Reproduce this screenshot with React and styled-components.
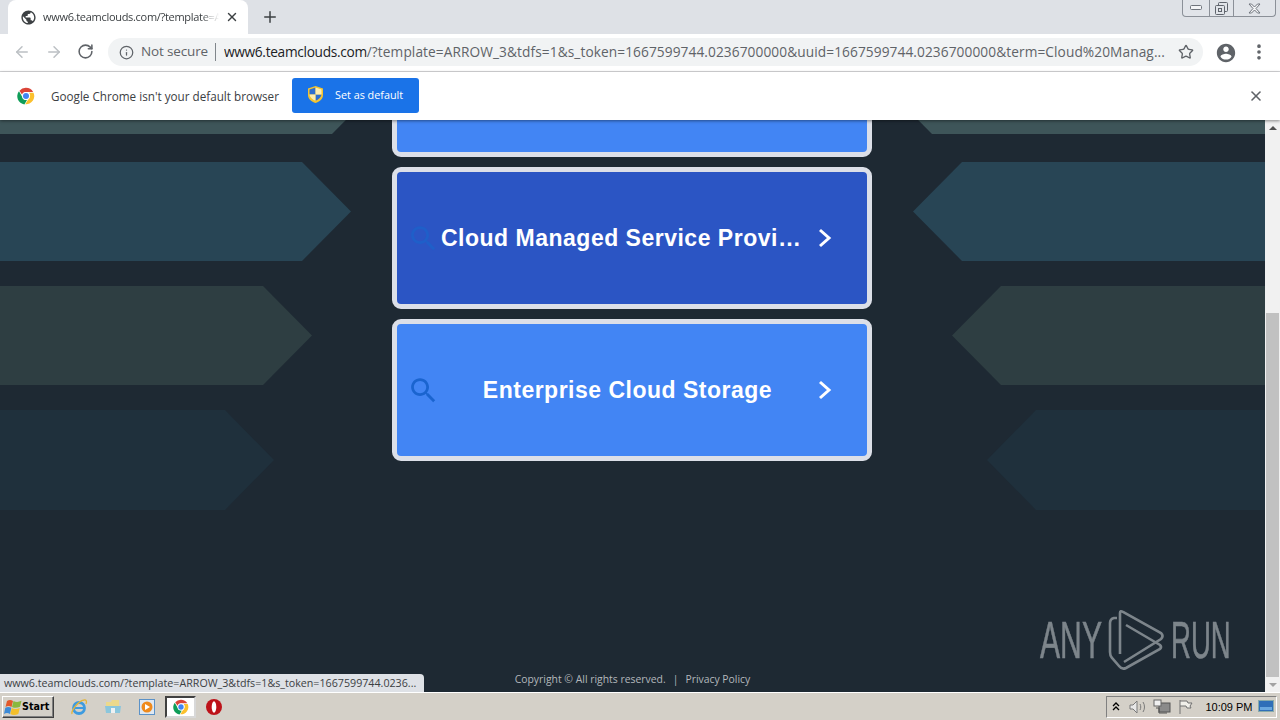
import React from "react";
import styled, { createGlobalStyle } from "styled-components";
import { ArrowLeft, ArrowRight, RotateCw, Star, Info, MoreVertical, X, Plus } from "lucide-react";

const Global = createGlobalStyle`
  html, body { margin: 0; padding: 0; width: 1280px; height: 720px; overflow: hidden; background: #1e2933; }
  * { box-sizing: border-box; }
`;

const UI = `"Open Sans", "Noto Sans", sans-serif`;

const Screen = styled.div`
  width: 1280px; height: 720px; display: flex; flex-direction: column; overflow: hidden;
  font-family: ${UI}; position: relative;
`;

/* ---------- tab strip ---------- */
const TabStrip = styled.div`
  height: 34px; flex: none; background: #dee1e6; display: flex; align-items: flex-end; padding-left: 8px; position: relative;
`;
const Tab = styled.div`
  width: 240px; height: 34px; background: #fff; border-radius: 8px 8px 0 0; display: flex; align-items: center;
  padding: 0 9px 0 12px; color: #3c4043;
`;
const TabTitle = styled.div`
  width: 176px; margin: 0 0 2px 6px; font-size: 11px; letter-spacing: -0.3px; white-space: nowrap; overflow: hidden;
  -webkit-mask-image: linear-gradient(90deg, #000 90%, transparent);
  mask-image: linear-gradient(90deg, #000 90%, transparent);
`;
const TabClose = styled.div`
  margin-left: auto; display: flex; color: #3c4043;
`;
const NewTab = styled.div`
  margin: 0 0 8px 13px; width: 18px; height: 18px; display: flex; color: #3c4043;
`;
const WindowControls = styled.div`
  position: absolute; right: 4px; top: 0; height: 17px; display: flex; border: 1px solid #8b9098; border-top: 0;
  border-radius: 0 0 4px 4px; background: #e1e4e9;
`;
const WinButton = styled.div`
  width: ${p => p.$w}px; display: flex; align-items: center; justify-content: center;
  & + & { border-left: 1px solid #8b9098; }
`;

/* ---------- toolbar ---------- */
const Toolbar = styled.div`
  height: 38px; flex: none; background: #fff; border-bottom: 1px solid #d7d8da; display: flex; align-items: center; padding: 0 0 1px 13px;
`;
const NavButton = styled.div`
  width: 18px; height: 18px; margin-right: ${p => p.$gap}px; display: flex; color: ${p => (p.$off ? "#bcc0c4" : "#5f6368")};
`;
const Omnibox = styled.div`
  width: 1095px; height: 28px; margin-left: 13px; background: #f1f3f4; border-radius: 14px; display: flex; align-items: center;
  padding: 0 9px 0 11px; font-size: 14px;
`;
const SecurityLabel = styled.span`
  margin: 0 0 2px 7px; color: #5f6368; font-size: 13.5px; letter-spacing: -0.15px; white-space: nowrap;
`;
const Separator = styled.span`
  width: 1px; height: 18px; margin: 0 8px 0 7px; background: #80868b; flex: none;
`;
const Url = styled.div`
  width: 945px; margin-bottom: 2px; white-space: nowrap; overflow: hidden; color: #5f6368; font-size: 13.7px; letter-spacing: 0.09px;
`;
const Host = styled.span`
  color: #202124; letter-spacing: -0.31px;
`;
const StarSlot = styled.div`
  margin-left: auto; display: flex; color: #5f6368;
`;
const Profile = styled.div`
  margin-left: 12px; width: 22px; height: 22px; display: flex; color: #5f6368;
`;
const MenuDots = styled.div`
  margin-left: 12px; width: 20px; height: 20px; display: flex; color: #5f6368;
`;

/* ---------- infobar ---------- */
const Infobar = styled.div`
  height: 48px; flex: none; background: #fff; display: flex; align-items: center; padding: 0 16px 0 17px; position: relative; z-index: 3;
  box-shadow: 0 1px 3px rgba(0,0,0,.45);
`;
const InfoText = styled.div`
  margin-left: 16px; font-size: 11.7px; color: #3c4043; white-space: nowrap; width: 241px;
`;
const DefaultButton = styled.div`
  width: 127px; height: 35px; margin-top: -2px; background: #1a73e8; border-radius: 3px; display: flex; align-items: center; padding-left: 16px;
  color: #fff; font-size: 10.8px; gap: 12px; line-height: 14px; padding-bottom: 1px;
`;
const InfoClose = styled.div`
  margin-left: auto; display: flex; color: #5f6368;
`;

/* ---------- page ---------- */
const Page = styled.div`
  height: 572px; flex: none; display: flex; position: relative;
`;
const Viewport = styled.div`
  flex: 1; position: relative; overflow: hidden; background: #1e2933; display: flex; flex-direction: column;
`;
const Backdrop = styled.div`
  position: absolute; left: 0; right: 0; top: -85px; display: flex; flex-direction: column; gap: 25px;
`;
const ArrowRow = styled.div`
  height: ${p => p.$h || 99}px; margin-bottom: ${p => p.$mb || 0}px; display: flex; justify-content: space-between; flex: none;
`;
const LeftArrow = styled.div`
  width: ${p => p.$w}px; background: ${p => p.$c};
  clip-path: polygon(0 0, calc(100% - 49px) 0, 100% 50%, calc(100% - 49px) 100%, 0 100%);
`;
const RightArrow = styled.div`
  width: ${p => p.$w}px; background: ${p => p.$c};
  clip-path: polygon(49px 0, 100% 0, 100% 100%, 49px 100%, 0 50%);
`;
const CardStack = styled.div`
  position: relative; width: 480px; margin: -105px auto 0; display: flex; flex-direction: column; gap: 10px; flex: none; left: -0.5px;
`;
const Card = styled.a`
  height: 142px; border: 5px solid #dcdfe8; border-radius: 9px; background: ${p => (p.$hover ? "#2b55c4" : "#4285f4")};
  display: grid; grid-template-columns: 33px 373px 14px; column-gap: 1px; align-items: center; padding-left: 10px; color: #fff;
  font-family: "Liberation Sans", Arial, sans-serif; font-weight: 700; font-size: 23px; letter-spacing: 0.5px;
`;
const SearchGlyph = styled.svg`
  width: 33px; height: 33px; fill: ${p => (p.$hover ? "#1f5fc9" : "#1a64cf")};
`;
const CardLabel = styled.div`
  text-align: center; white-space: nowrap; overflow: hidden; text-overflow: ellipsis;
`;
const Chevron = styled.svg`
  width: 14px; height: 20px; margin-left: 3px; fill: none; stroke: #fff; stroke-width: 3px;
`;
const Footer = styled.div`
  margin-top: auto; height: 20px; position: relative; text-align: center; color: #b3b8bc; font-size: 10.4px; white-space: nowrap;
  display: flex; justify-content: center; gap: 7px;
`;
const FooterLink = styled.span`
  color: #b3b8bc;
`;
const Watermark = styled.div`
  position: absolute; right: 34px; bottom: 20px; display: flex; align-items: center; color: #7d858b;
  font-family: "Liberation Sans", sans-serif; font-size: 52px; line-height: 64px;
`;
const WatermarkWord = styled.span`
  display: inline-block; width: ${p => p.$w}px; transform: scaleX(${p => p.$s}); transform-origin: left center; white-space: nowrap;
  -webkit-text-stroke: 0.6px #7d858b;
`;
const LogoSvg = styled.svg`
  width: 58px; height: 64px; margin: 0 5px 0 6px; flex: none; fill: none; stroke: #7d858b; stroke-width: 2.6px;
`;
const StatusBubble = styled.div`
  position: absolute; left: 0; bottom: 0; width: 424px; height: 18px; background: #dee1e6; border-radius: 0 4px 0 0; color: #3c4043;
  font-size: 10.7px; line-height: 18px; padding-left: 4px; white-space: nowrap; overflow: hidden;
`;

const Scrollbar = styled.div`
  width: 15px; flex: none; background: #f1f1f1; display: flex; flex-direction: column; align-items: center;
`;
const ScrollButton = styled.div`
  height: 15px; flex: none; display: flex; align-items: center; justify-content: center;
`;
const ScrollTriangle = styled.div`
  width: 0; height: 0; border-left: 4px solid transparent; border-right: 4px solid transparent;
  ${p => (p.$down ? "border-top: 4px solid #a3a3a3;" : "border-bottom: 4px solid #505050;")}
`;
const ScrollTrack = styled.div`
  flex: 1; width: 100%; display: flex; flex-direction: column; justify-content: flex-end; padding: 0 1px;
`;
const ScrollThumb = styled.div`
  height: 364px; background: #c1c1c1;
`;

/* ---------- taskbar ---------- */
const Taskbar = styled.div`
  height: 28px; flex: none; background: #d4d0c8; border-top: 1px solid #fff; display: flex; align-items: center; padding: 0 3px 0 2px;
`;
const StartButton = styled.div`
  width: 52px; height: 22px; display: flex; align-items: center; gap: 0; padding-left: 1px;
  background: #d4d0c8; border: 1px solid; border-color: #fff #404040 #404040 #fff; box-shadow: inset -1px -1px 0 #808080;
  font-family: "DejaVu Sans", sans-serif; font-weight: 700; font-size: 9.6px; color: #000;
`;
const QuickLaunch = styled.div`
  display: flex; align-items: center; margin-left: 8px;
`;
const QuickIcon = styled.div`
  width: ${p => p.$w || 34}px; height: 22px; display: flex; align-items: center; justify-content: center;
  ${p => p.$active && "background:#fff; border:2px solid; border-color:#404040 #d8d8d8 #d8d8d8 #404040; margin:0 1px;"}
`;
const Tray = styled.div`
  margin-left: auto; width: 171px; height: 22px; display: flex; align-items: center; border: 1px solid; border-color: #808080 #fff #fff #808080;
  font-family: "Liberation Sans", sans-serif; font-size: 11px; color: #000;
`;
const TraySlot = styled.div`
  width: ${p => p.$w}px; display: flex; justify-content: center; align-items: center; flex: none;
`;
const Clock = styled.div`
  width: 54px; text-align: center; white-space: nowrap; flex: none;
`;

/* ---------- drawings ---------- */
const Mat = ({ d, size = 24 }) => (
  <svg width={size} height={size} viewBox="0 0 24 24" fill="currentColor"><path d={d} /></svg>
);
const GLOBE = "M12 2C6.48 2 2 6.48 2 12s4.48 10 10 10 10-4.48 10-10S17.52 2 12 2zm-1 17.93c-3.95-.49-7-3.85-7-7.93 0-.62.08-1.21.21-1.79L9 15v1c0 1.1.9 2 2 2v1.93zm6.9-2.54c-.26-.81-1-1.39-1.9-1.39h-1v-3c0-.55-.45-1-1-1H8v-2h2c.55 0 1-.45 1-1V7h2c1.1 0 2-.9 2-2v-.41c2.93 1.19 5 4.06 5 7.41 0 2.08-.8 3.97-2.1 5.39z";
const ACCOUNT = "M12 2C6.48 2 2 6.48 2 12s4.48 10 10 10 10-4.48 10-10S17.52 2 12 2zm0 3c1.66 0 3 1.34 3 3s-1.34 3-3 3-3-1.34-3-3 1.34-3 3-3zm0 14.2c-2.5 0-4.71-1.28-6-3.22.03-1.99 4-3.08 6-3.08 1.99 0 5.97 1.09 6 3.08-1.29 1.94-3.5 3.22-6 3.22z";
const SEARCH = "M15.5 14h-.79l-.28-.27C15.41 12.59 16 11.11 16 9.5 16 5.91 13.09 3 9.5 3S3 5.91 3 9.5 5.91 16 9.5 16c1.61 0 3.09-.59 4.23-1.57l.27.28v.79l5 4.99L20.49 19l-4.99-5zm-6 0C7.01 14 5 11.99 5 9.5S7.01 5 9.5 5 14 7.01 14 9.5 11.99 14 9.5 14z";

const ChromeLogo = ({ size = 18 }) => (
  <svg width={size} height={size} viewBox="0 0 48 48">
    <path fill="#db4437" d="M24 2a22 22 0 0 1 19.05 11H24a11 11 0 0 0-10.4 7.4L6.6 9.9A22 22 0 0 1 24 2z" />
    <path fill="#0f9d58" d="M5.3 11.4l9.9 17.2A11 11 0 0 0 26.6 34.7l-6.9 11.9A22 22 0 0 1 5.3 11.4z" />
    <path fill="#fbc02d" d="M44.1 15A22 22 0 0 1 22 46l9.7-16.2A11 11 0 0 0 31.6 15z" />
    <circle cx="24" cy="24" r="10.5" fill="#fff" />
    <circle cx="24" cy="24" r="8" fill="#4285f4" />
  </svg>
);

const Shield = () => (
  <svg width="15" height="17" viewBox="0 0 15 17">
    <path fill="#f4c430" d="M7.5 0L15 2.5V9c0 4-3.5 6.8-7.5 8C3.500 15.800 0 13 0 9V2.500z" />
    <path fill="#2f6fd0" d="M7.500 1.500V8.500H1.500V3.500zM7.500 8.500H13.500c-.3 3-3 5.200-6 6.200z" />
    <path fill="#fff3c0" d="M7.500 8.500V14.700C4.500 13.700 1.800 11.500 1.500 8.500zM7.500 1.500L13.500 3.500V8.500H7.500z" opacity=".9" />
  </svg>
);

const WinFlag = () => (
  <svg width="18" height="16" viewBox="0 0 18 16">
    <path fill="#e2582a" d="M3 2c2-1.500 4-1.500 6 0L7.500 8C5.500 6.700 3.500 6.700 1.500 8z" />
    <path fill="#8ab83e" d="M9.500 2c2.500 1.200 5 1.200 8-.2l-1.500 6c-3 1.300-5.500 1.300-8 .1z" />
    <path fill="#3d8ad6" d="M1.300 8.800c2-1.200 4-1.200 6 0L6 15C4 13.800 2 13.800 0 15z" />
    <path fill="#f4bf2a" d="M7.800 9.100c2.500 1.200 5 1.200 8-.2l-1.500 6c-3 1.300-5.500 1.300-8 .1z" />
  </svg>
);

const IEIcon = () => (
  <svg width="18" height="18" viewBox="0 0 18 18">
    <circle cx="9" cy="10" r="5.500" fill="none" stroke="#3d9be0" strokeWidth="2.800" />
    <path d="M4 10h10" stroke="#3d9be0" strokeWidth="2" />
    <path d="M2 16C1 13 8 3 14 2c2.500-.5 3 1.500 2 4" fill="none" stroke="#e3b43b" strokeWidth="1.300" />
  </svg>
);
const FolderIcon = () => (
  <svg width="16" height="16" viewBox="0 0 16 16">
    <path fill="#ecd98c" d="M1 3h5l1-2h7v13H1z" />
    <path fill="#8bc6dc" d="M0 7h16l-1 7H1z" />
    <rect x="6" y="9" width="4" height="5" fill="#eef1f3" />
  </svg>
);
const PlayerIcon = () => (
  <svg width="16" height="16" viewBox="0 0 16 16">
    <rect x=".5" y=".5" width="15" height="15" fill="#dfe8f2" stroke="#5b92c8" />
    <circle cx="8" cy="8" r="5.500" fill="#ef8a1c" />
    <path d="M6 5l5 3-5 3z" fill="#fff" />
  </svg>
);
const OperaIcon = () => (
  <svg width="16" height="16" viewBox="0 0 16 16">
    <circle cx="8" cy="8" r="8" fill="#bd1219" />
    <ellipse cx="8" cy="8" rx="2.300" ry="5.800" fill="#fff" />
  </svg>
);
const Speaker = () => (
  <svg width="20" height="16" viewBox="0 0 20 16" fill="none" stroke="#7a7a7a">
    <path d="M2 6h3l4-4v12l-4-4H2z" fill="#e8e8e8" />
    <path d="M12 5c1 2 1 4 0 6M15 3c2 3 2 7 0 10" />
  </svg>
);
const Network = () => (
  <svg width="18" height="16" viewBox="0 0 18 16">
    <rect x="6" y="4" width="11" height="9" fill="#8a8a8a" stroke="#555" />
    <rect x="1" y="1" width="7" height="6" fill="#f0f0f0" stroke="#666" />
    <path d="M3 9h3v5h8" fill="none" stroke="#555" />
  </svg>
);
const TrayFlag = () => (
  <svg width="16" height="16" viewBox="0 0 16 16" fill="none" stroke="#707070">
    <path d="M2 1v14M2 2h7l1 2h4l-2 3 1 2H9L8 7H2" fill="#f0efe9" />
  </svg>
);
const DesktopIcon = () => (
  <svg width="16" height="13" viewBox="0 0 16 13">
    <rect x=".5" y=".5" width="15" height="11" fill="#2f6fb8" stroke="#8aa" />
    <rect x="2" y="7" width="12" height="3" fill="#6aa8de" />
  </svg>
);
const AnyRunMark = () => (
  <LogoSvg viewBox="8 4 58 64">
    <path d="M20 50V9q0-3 3-1l38 21q3 3 0 6L24 58" />
    <path d="M26 21l34 20q2 2 0 4L26 64q-4 2-7-2l-7-8q-2-2-2-6V19q0-4 4-5h3" />
  </LogoSvg>
);

const WinMin = () => <svg width="12" height="6" viewBox="0 0 12 6"><rect x=".5" y=".5" width="11" height="4" rx="1" fill="#f4f5f7" stroke="#6f747c" /></svg>;
const WinRestore = () => <svg width="13" height="13" viewBox="0 0 13 13" fill="none" stroke="#5f646c"><rect x="3.500" y=".5" width="9" height="9" rx="1" /><rect x=".5" y="3.500" width="9" height="9" rx="1" fill="#e1e4e9" /><rect x="3.500" y="6.500" width="3" height="3" /></svg>;
const WinClose = () => <svg width="13" height="11" viewBox="0 0 13 11" fill="none" stroke="#6f747c"><path d="M1 1h2.500l3 3 3-3H12L8 5.500 12 10H9.500l-3-3-3 3H1l4-4.500z" fill="#f4f5f7" /></svg>;

const cards = [
  { label: "", top: true },
  { label: "Cloud Managed Service Providers", hover: true },
  { label: "Enterprise Cloud Storage" },
];

const rows = [
  { l: 381, r: 382, c: "#3e5559", mb: 3 },
  { l: 351, r: 352, c: "#284555" },
  { l: 312, r: 313, c: "#2e3e42" },
  { l: 274, r: 278, c: "#1f303c", h: 100 },
];

export default function App() {
  return (
    <Screen>
      <Global />
      <TabStrip>
        <Tab>
          <Mat d={GLOBE} size={17} />
          <TabTitle>www6.teamclouds.com/?template=ARROW_3</TabTitle>
          <TabClose><X size={14} strokeWidth={2.4} /></TabClose>
        </Tab>
        <NewTab><Plus size={18} strokeWidth={2} /></NewTab>
        <WindowControls>
          <WinButton $w={26}><WinMin /></WinButton>
          <WinButton $w={24}><WinRestore /></WinButton>
          <WinButton $w={42}><WinClose /></WinButton>
        </WindowControls>
      </TabStrip>

      <Toolbar>
        <NavButton $off $gap={14}><ArrowLeft size={18} /></NavButton>
        <NavButton $off $gap={14}><ArrowRight size={18} /></NavButton>
        <NavButton $gap={0}><RotateCw size={17} strokeWidth={2.2} /></NavButton>
        <Omnibox>
          <Info size={15} color="#5f6368" />
          <SecurityLabel>Not secure</SecurityLabel>
          <Separator />
          <Url><Host>www6.teamclouds.com</Host>/?template=ARROW_3&amp;tdfs=1&amp;s_token=1667599744.0236700000&amp;uuid=1667599744.0236700000&amp;term=Cloud%20Manag...</Url>
          <StarSlot><Star size={16} strokeWidth={2} /></StarSlot>
        </Omnibox>
        <Profile><Mat d={ACCOUNT} size={24} /></Profile>
        <MenuDots><MoreVertical size={20} strokeWidth={2.4} /></MenuDots>
      </Toolbar>

      <Infobar>
        <ChromeLogo />
        <InfoText>Google Chrome isn't your default browser</InfoText>
        <DefaultButton><Shield /><span>Set as default</span></DefaultButton>
        <InfoClose><X size={16} strokeWidth={2.4} /></InfoClose>
      </Infobar>

      <Page>
        <Viewport>
          <Backdrop>
            {rows.map((r, i) => (
              <ArrowRow key={i} $h={r.h} $mb={r.mb}>
                <LeftArrow $w={r.l} $c={r.c} />
                <RightArrow $w={r.r} $c={r.c} />
              </ArrowRow>
            ))}
          </Backdrop>
          <CardStack>
            {cards.map((c, i) => (
              <Card key={i} $hover={c.hover}>
                {!c.top && <SearchGlyph $hover={c.hover} viewBox="0 0 24 24"><path d={SEARCH} /></SearchGlyph>}
                {!c.top && <CardLabel>{c.label}</CardLabel>}
                {!c.top && (
                  <Chevron viewBox="0 0 14 20"><polyline points="2,2 11,10 2,18" /></Chevron>
                )}
              </Card>
            ))}
          </CardStack>
          <Footer>
            <span>Copyright © All rights reserved.</span><span>|</span><FooterLink>Privacy Policy</FooterLink>
          </Footer>
          <Watermark>
            <WatermarkWord $w={62} $s={0.58}>ANY</WatermarkWord>
            <AnyRunMark />
            <WatermarkWord $w={60} $s={0.53}>RUN</WatermarkWord>
          </Watermark>
          <StatusBubble>www6.teamclouds.com/?template=ARROW_3&amp;tdfs=1&amp;s_token=1667599744.0236...</StatusBubble>
        </Viewport>
        <Scrollbar>
          <ScrollButton><ScrollTriangle /></ScrollButton>
          <ScrollTrack><ScrollThumb /></ScrollTrack>
          <ScrollButton><ScrollTriangle $down /></ScrollButton>
        </Scrollbar>
      </Page>

      <Taskbar>
        <StartButton><WinFlag />Start</StartButton>
        <QuickLaunch>
          <QuickIcon><IEIcon /></QuickIcon>
          <QuickIcon><FolderIcon /></QuickIcon>
          <QuickIcon><PlayerIcon /></QuickIcon>
          <QuickIcon $active $w={31}><ChromeLogo size={16} /></QuickIcon>
          <QuickIcon><OperaIcon /></QuickIcon>
        </QuickLaunch>
        <Tray>
          <TraySlot $w={18}><svg width="8" height="9" viewBox="0 0 8 9" fill="none" stroke="#000" strokeWidth="1.300"><path d="M1 4l3-3 3 3M1 8l3-3 3 3" /></svg></TraySlot>
          <TraySlot $w={25}><Speaker /></TraySlot>
          <TraySlot $w={24}><Network /></TraySlot>
          <TraySlot $w={24}><TrayFlag /></TraySlot>
          <TraySlot $w={4} />
          <Clock>10:09 PM</Clock>
          <TraySlot $w={20}><DesktopIcon /></TraySlot>
        </Tray>
      </Taskbar>
    </Screen>
  );
}
